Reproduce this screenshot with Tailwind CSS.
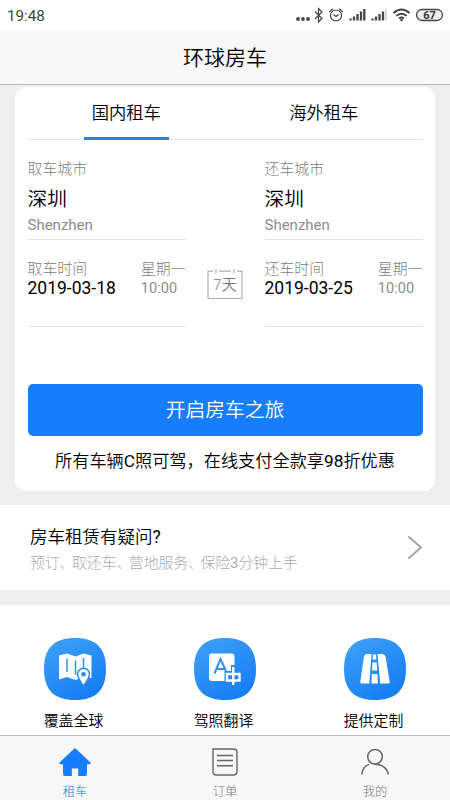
<!DOCTYPE html>
<html lang="zh-CN">
<head>
<meta charset="utf-8">
<meta name="viewport" content="width=device-width, initial-scale=1">
<title>环球房车</title>
<script src="https://cdn.jsdelivr.net/npm/@tailwindcss/browser@4"></script>
</head>
<body class="bg-[#eeeeee]">
<div class="w-[450px] h-[800px] overflow-hidden flex flex-col bg-[#eeeeee] text-black font-[Roboto,'Noto_Sans_CJK_SC',sans-serif] whitespace-nowrap">

  <!-- Status bar -->
  <div class="h-[30px] shrink-0 bg-white flex items-center justify-between pl-[7px] pr-[6px] text-[#444]">
    <span class="text-[15.2px] leading-[30px] pt-[2px]">19:48</span>
    <svg width="150" height="30" viewBox="294 0 150 30" fill="none" stroke="#444" stroke-width="1.2">
      <g fill="#444" stroke="none"><circle cx="298" cy="19" r="1.9"/><circle cx="303" cy="19" r="1.9"/><circle cx="308" cy="19" r="1.9"/></g>
      <path d="M315 11.500l7 7-3.500 3.500V8.500l3.500 3.500-7 7"/>
      <circle cx="336" cy="15.500" r="5.500"/><path d="M333.500 14.500l2.500 2 2.500-2M329.300 12l3.500-3.200M342.700 12l-3.500-3.200"/>
      <g stroke-width="2.300"><path d="M350.500 20.500v-2M354 20.500v-4M357.500 20.500v-6.500M361 20.500v-9M364.300 20.500v-11.500"/><path d="M372.500 20.500v-2M376 20.500v-4M379.500 20.500v-6.500M383 20.500v-9"/><path d="M386 20.500v-11.500" stroke="#ccc" stroke-width="1.500"/></g>
      <g stroke-width="1.900"><path d="M393.500 13q8-7 16 0M396.300 15.900q5.200-4.500 10.400 0M399 18.600q2.500-2.200 5 0"/></g><circle cx="401.500" cy="20" r="1.300" fill="#444" stroke="none"/>
      <rect x="416.500" y="9.500" width="26" height="11" rx="5.500" fill="#eee" stroke-width="1.300"/>
      <text x="429.500" y="19" text-anchor="middle" font-family="Roboto,sans-serif" font-size="11" font-weight="700" fill="#333" stroke="none">67</text>
    </svg>
  </div>

  <!-- Title bar -->
  <header class="h-[55px] shrink-0 bg-[#f7f7f7] border-b border-[#b8b8b8] flex items-center justify-center">
    <h1 class="text-[21px] leading-[30px] pt-[2px] font-[350]">环球房车</h1>
  </header>

  <!-- Booking card -->
  <main class="mt-[2px] mx-[15px] h-[404px] shrink-0 bg-white rounded-[11px] px-[12.5px] flex flex-col">
    <nav class="h-[53px] shrink-0 border-b border-[#e4e4e4] grid grid-cols-2 text-[17.3px] font-[350]">
      <div class="h-[53px] flex justify-center"><span class="w-[85px] text-center leading-[53px] h-[53px] border-b-[3px] border-[#2e82cf]">国内租车</span></div>
      <div class="h-[53px] text-center leading-[53px]">海外租车</div>
    </nav>

    <div class="h-[100px] shrink-0 flex justify-between">
      <section class="w-[158px] border-b border-[#e4e4e4] pt-[18px] flex flex-col">
        <span class="text-[14.9px] leading-[22px] text-[#808080] font-light">取车城市</span>
        <span class="text-[19.7px] leading-[28px] mt-[6px] font-[350]">深圳</span>
        <span class="text-[15px] leading-[20px] mt-[1px] text-[#8c8c8c]">Shenzhen</span>
      </section>
      <section class="w-[158px] border-b border-[#e4e4e4] pt-[18px] flex flex-col">
        <span class="text-[14.9px] leading-[22px] text-[#808080] font-light">还车城市</span>
        <span class="text-[19.7px] leading-[28px] mt-[6px] font-[350]">深圳</span>
        <span class="text-[15px] leading-[20px] mt-[1px] text-[#8c8c8c]">Shenzhen</span>
      </section>
    </div>

    <div class="h-[87px] shrink-0 flex justify-between">
      <section class="w-[158px] border-b border-[#e4e4e4] pt-[19px] flex justify-between">
        <div class="flex flex-col"><span class="text-[14.9px] leading-[20px] text-[#808080] font-light">取车时间</span><span class="text-[17.5px] leading-[18px]">2019-03-18</span></div>
        <div class="flex flex-col text-[#8c8c8c]"><span class="text-[14.9px] leading-[20px] text-[#808080] font-light">星期一</span><span class="text-[14.6px] leading-[18px]">10:00</span></div>
      </section>
      <svg class="mt-[26px]" width="38" height="36" viewBox="206 266 38 36" fill="none" stroke="#b0b0b0" stroke-width="1.200">
        <path d="M213 271.200h-5v27.300h34v-27.300h-5M219 271.200h12M216 269v4.500M234 269v4.500"/>
        <text x="225" y="290.300" text-anchor="middle" font-family="Roboto,'Noto Sans CJK SC',sans-serif" font-size="15" font-weight="350" fill="#777" stroke="none">7天</text>
      </svg>
      <section class="w-[158px] border-b border-[#e4e4e4] pt-[19px] flex justify-between">
        <div class="flex flex-col"><span class="text-[14.9px] leading-[20px] text-[#808080] font-light">还车时间</span><span class="text-[17.5px] leading-[18px]">2019-03-25</span></div>
        <div class="flex flex-col text-[#8c8c8c]"><span class="text-[14.9px] leading-[20px] text-[#808080] font-light">星期一</span><span class="text-[14.6px] leading-[18px]">10:00</span></div>
      </section>
    </div>

    <button class="mt-[57px] h-[52px] shrink-0 rounded-[5px] bg-[#177efb] text-white text-[19.8px] leading-[50px] pt-[2px] font-[350]">开启房车之旅</button>
    <p class="text-center text-[17.200px] leading-[26px] mt-[12px] font-[350]">所有车辆<span class="font-normal">C</span>照可驾，在线支付全款享<span class="font-normal">98</span>折优惠</p>
  </main>

  <!-- Help entry -->
  <section class="mt-[14px] h-[85px] shrink-0 bg-white flex items-center justify-between pl-[30px] pr-[27px]">
    <div class="flex flex-col pt-[5px] font-light">
      <span class="text-[17.500px] leading-[26px] font-[350]">房车租赁有疑问<span class="font-normal">?</span></span>
      <span class="text-[14.800px] leading-[26px] text-[#aaa]">预订<span class="tracking-[-2.4px]">、</span>取还车<span class="tracking-[-2.4px]">、</span>营地服务<span class="tracking-[-2.4px]">、</span>保险<span class="font-normal">3</span>分钟上手</span>
    </div>
    <svg width="16" height="26" viewBox="0 0 16 26" fill="none" stroke="#a0a0a0" stroke-width="1.800"><path d="M1.500 1.500l12.500 11-12.500 11"/></svg>
  </section>

  <!-- Services -->
  <section class="mt-[15px] h-[130px] shrink-0 bg-white grid grid-cols-3 pt-[33px] text-[14.900px] font-[350]">
    <div class="flex flex-col items-center">
      <svg width="62" height="62" viewBox="0 0 62 62">
        <defs><linearGradient id="tile" x1="0" y1="0" x2="0.600" y2="1"><stop offset="0" stop-color="#40a2f7"/><stop offset="1" stop-color="#177ff4"/></linearGradient></defs>
        <path d="M31 0C52 0 62 10 62 31S52 62 31 62 0 52 0 31 10 0 31 0Z" fill="url(#tile)"/>
        <path d="M15 17.500l8-2 8.500 3 8-3 8 2v22.500l-8-1-8 3-8.500-3-8 2.500Z" fill="#fff"/>
        <path d="M23 20.500v13.500M31.500 22.500v14M39.500 20v10" stroke="#3092f6" stroke-width="1.500"/>
        <path d="M39.500 48c-3-4.500-6-8.300-6-11.800a6 6 0 0 1 12 0c0 3.500-3 7.300-6 11.800Z" fill="#fff" stroke="#278cf5" stroke-width="1.500"/>
        <circle cx="39.500" cy="36.200" r="2.300" fill="#278cf5"/>
      </svg>
      <span class="leading-[22px] mt-[10px] mr-[3px]">覆盖全球</span>
    </div>
    <div class="flex flex-col items-center">
      <svg width="62" height="62" viewBox="0 0 62 62">
        <path d="M31 0C52 0 62 10 62 31S52 62 31 62 0 52 0 31 10 0 31 0Z" fill="url(#tile)"/>
        <path d="M18 15.500h19.500a3 3 0 0 1 3 3v8.500h-3.500v6h-6.500v10H18a3 3 0 0 1-3-3v-21.500a3 3 0 0 1 3-3Z" fill="#fff"/>
        <path d="M20.500 35.500l6-14.500 5.500 12M22.500 31h8" fill="none" stroke="#3092f6" stroke-width="2"/>
        <path d="M33 36h12.500v6.500h-12.500ZM39.250 29v18" fill="none" stroke="#fff" stroke-width="2.400"/>
      </svg>
      <span class="leading-[22px] mt-[10px] mr-[3px]">驾照翻译</span>
    </div>
    <div class="flex flex-col items-center">
      <svg width="62" height="62" viewBox="0 0 62 62">
        <path d="M31 0C52 0 62 10 62 31S52 62 31 62 0 52 0 31 10 0 31 0Z" fill="url(#tile)"/>
        <path d="M23 16h4.500l-2.200 29.500h-7.800q-1.500 0-1.200-1.800l3.700-25.200q.5-2.500 3-2.500ZM33.500 16h5q2.500 0 3 2.500l4.200 25.200q.3 1.800-1.200 1.800h-8.300ZM29 16.500h3l.3 5h-3.600ZM28.500 24.500h4.200l.4 8h-5ZM27.900 36h5.600l.4 9.500h-6.400Z" fill="#fff"/>
      </svg>
      <span class="leading-[22px] mt-[10px] mr-[3px]">提供定制</span>
    </div>
  </section>

  <!-- Bottom tabs -->
  <footer class="h-[65px] shrink-0 bg-[#f7f7f7] border-t border-[#bdbdbd] grid grid-cols-3 text-[12.300px] text-[#777] font-light">
    <div class="flex flex-col items-center pt-[11px] text-[#2279d0]">
      <svg width="34" height="30" viewBox="0 0 34 30"><path d="M17 1l15.500 14.500q1 1.500-1 1.800h-2.500v9.700q0 2-2 2h-6.800v-7.500h-6.300v7.500h-6.900q-2 0-2-2v-9.700h-2.500q-2-.3-1-1.800Z" fill="#177efb"/></svg>
      <span class="leading-[18px] mt-[6px]">租车</span>
    </div>
    <div class="flex flex-col items-center pt-[11px]">
      <svg width="28" height="30" viewBox="0 0 28 30" fill="none" stroke="#666" stroke-width="1.400"><path d="M2 2h20.500q3.500 0 3.500 3.500v19q0 3.500-3.500 3.500h-17q-3.500 0-3.500-3.500ZM6 8.500h16M6 13.500h16M6 18.800h16"/></svg>
      <span class="leading-[18px] mt-[6px]">订单</span>
    </div>
    <div class="flex flex-col items-center pt-[11px]">
      <svg width="30" height="30" viewBox="0 0 30 30" fill="none" stroke="#666" stroke-width="1.500"><circle cx="15" cy="9.700" r="7.300"/><path d="M1.800 27.500c.5-5.300 3.500-8.900 7.500-10.100M14.500 17.200c8 0 13 4.300 13.900 10.300"/></svg>
      <span class="leading-[18px] mt-[6px]">我的</span>
    </div>
  </footer>
</div>
</body>
</html>
